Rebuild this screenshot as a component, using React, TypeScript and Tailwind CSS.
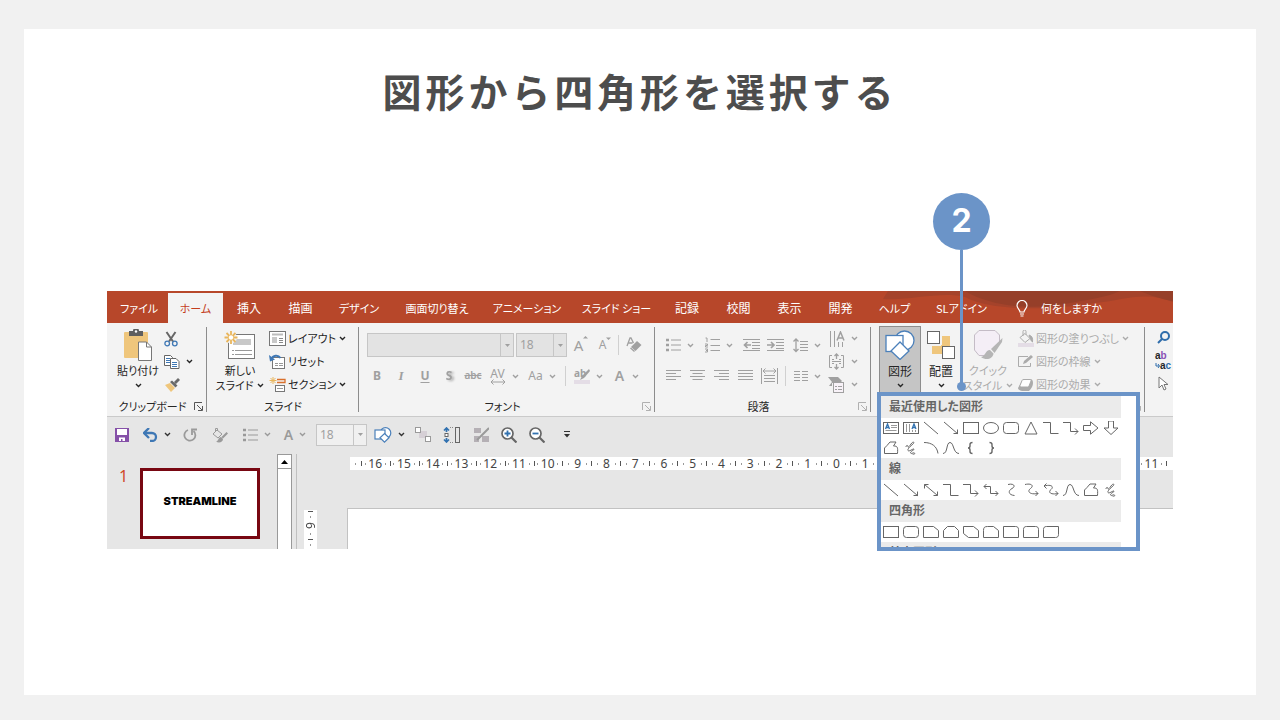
import type { ReactNode } from 'react';

// ── Icon primitives ───────────────────────────────────────────────────────────

interface IconProps {
  w: number;
  h: number;
  className?: string;
  children: ReactNode;
}

function Icon({ w, h, className = '', children }: IconProps) {
  return (
    <svg
      width={w}
      height={h}
      viewBox={`0 0 ${w} ${h}`}
      fill="none"
      stroke="currentColor"
      aria-hidden="true"
      className={`shrink-0 ${className}`}
    >
      {children}
    </svg>
  );
}

function Chevron({ className = '' }: { className?: string }) {
  return (
    <Icon w={7} h={5} className={className}>
      <path d="M1 1L3.5 3.5L6 1" strokeWidth="1.4" />
    </Icon>
  );
}

function Launcher({ className = '' }: { className?: string }) {
  return (
    <button type="button" aria-label="Dialog launcher" className={className}>
      <Icon w={9} h={9}>
        <path d="M.5 8V.5H8M3 3l5 5M8.5 4v4.5H4" />
      </Icon>
    </button>
  );
}

// ── Clipboard and slide icons ─────────────────────────────────────────────────

function PasteIcon() {
  return (
    <Icon w={30} h={32}>
      <rect x="1" y="3" width="24" height="26" rx="1" fill="#efc67c" stroke="none" />
      <path d="M6 2h4a3 3 0 0 1 6 0h4v5H6z" fill="#5f5f5f" stroke="none" />
      <circle cx="13" cy="2.5" r="1.2" fill="#fff" stroke="none" />
      <path d="M15.500 13h8l5 5v13.500h-13z" fill="#fff" stroke="#777" />
      <path d="M23.500 13v5h5" stroke="#777" />
    </Icon>
  );
}

function ScissorsIcon() {
  return (
    <Icon w={14} h={16}>
      <path d="M2.500 1l6.500 9.500M11.500 1L5 10.500" stroke="#666" strokeWidth="2" />
      <circle cx="3.200" cy="12.500" r="2.300" stroke="#3f78b5" strokeWidth="1.300" />
      <circle cx="10.800" cy="12.500" r="2.300" stroke="#3f78b5" strokeWidth="1.300" />
    </Icon>
  );
}

function CopyIcon() {
  return (
    <Icon w={16} h={15}>
      <path d="M.5 1.500h6l2 2v8h-8z" fill="#fff" stroke="#666" />
      <path d="M2 4.500h4M2 6.500h4M2 8.500h4" stroke="#3f78b5" />
      <path d="M6.500 4.500h5.500l3 3v7H6.500z" fill="#fff" stroke="#666" />
      <path d="M8 8.500h5M8 10.500h5M8 12.500h5" stroke="#3f78b5" />
    </Icon>
  );
}

function BrushIcon() {
  return (
    <Icon w={16} h={15}>
      <path d="M1 8l5-2 5 5-4 4z" fill="#efc67c" stroke="none" />
      <path d="M6 5l5.500 5.500 2-2L8 3.500zM10 5l4-4 2 2-4 4z" fill="#6a6a6a" stroke="none" />
    </Icon>
  );
}

function NewSlideIcon() {
  return (
    <Icon w={32} h={29}>
      <rect x="4.500" y="3.500" width="26" height="24" fill="#fff" stroke="#777" />
      <rect x="9" y="8" width="18" height="6" fill="#c8c8c8" stroke="none" />
      <path d="M8 19.500h2M8 23.500h2M11 19.500h17M11 23.500h17" stroke="#999" />
      <circle cx="7" cy="6.500" r="6" fill="#f3f3f3" stroke="none" />
      <path d="M7 0v13M.5 6.500h13M2.500 2l9 9M11.500 2l-9 9" stroke="#e9b65c" strokeWidth="1.800" />
      <circle cx="7" cy="6.500" r="2.200" fill="#fff" stroke="none" />
    </Icon>
  );
}

function LayoutIcon() {
  return (
    <Icon w={17} h={15}>
      <rect x=".5" y=".5" width="16" height="14" fill="#fff" stroke="#777" />
      <path d="M3 3.500h11" stroke="#bbb" strokeWidth="2" />
      <rect x="3" y="6" width="5" height="6" fill="#c8c8c8" stroke="none" />
      <path d="M10 7.500h4M10 9.500h4M10 11.500h4" stroke="#888" />
    </Icon>
  );
}

function ResetIcon() {
  return (
    <Icon w={17} h={15}>
      <rect x="3.500" y="3.500" width="12" height="11" fill="#fff" stroke="#777" />
      <path d="M6 9.500h3M6 11.500h3M10 9.500h4M10 11.500h4" stroke="#999" />
      <path d="M2 5.500C4 1 9 .5 11.500 4" stroke="#3f78b5" strokeWidth="2" />
      <path d="M0 1l1 6.500 5-2z" fill="#3f78b5" stroke="none" />
    </Icon>
  );
}

function SectionIcon() {
  return (
    <Icon w={17} h={15}>
      <path d="M4 0v7M.5 3.500h7M1.500 1l5 5M6.500 1l-5 5" stroke="#e9b65c" />
      <path d="M8 2.500h8v3H8" stroke="#d9702c" strokeWidth="1.300" />
      <rect x="6.500" y="8.500" width="9" height="6" fill="#fff" stroke="#777" />
      <path d="M8 11.500h6" stroke="#999" />
    </Icon>
  );
}

// ── Shape and drawing icons ───────────────────────────────────────────────────

function ShapesIcon({ size }: { size: number }) {
  return (
    <svg width={size} height={size} viewBox="0 0 30 30" fill="#fff" stroke="#4b80ba" strokeWidth="1.300" aria-hidden="true" className="shrink-0">
      <circle cx="19.500" cy="10.500" r="9.500" />
      <rect x="1" y="5.500" width="17" height="16" />
      <path d="M15 12l9 9-9 8.500L6 21z" />
    </svg>
  );
}

function SmallShapesIcon() {
  return (
    <Icon w={18} h={16}>
      <g fill="#fff" stroke="#4b80ba" strokeWidth="1.200">
        <circle cx="11.500" cy="6" r="5.300" />
        <rect x="1" y="3" width="10" height="9" />
        <path d="M10.500 6.500l4.500 4.300-4.500 4.300L6 10.800z" />
      </g>
    </Icon>
  );
}

function ArrangeIcon() {
  return (
    <Icon w={28} h={28}>
      <rect x="5" y="5" width="18" height="18" fill="#efc67c" stroke="none" />
      <rect x=".5" y=".5" width="12" height="12" fill="#fff" stroke="#666" />
      <path d="M14 14V3M3 14h11" stroke="#f3f3f3" strokeWidth="2" />
      <rect x="15.500" y="15.500" width="12" height="12" fill="#fff" stroke="#666" />
    </Icon>
  );
}

function QuickStyleIcon() {
  return (
    <Icon w={31} h={33}>
      <path d="M11 26.500H6L1.500 21V6L6 1.500h16L26.500 6v7" fill="#f4eef6" stroke="#c4bcc6" />
      <path d="M29.500 9L18 20l3.500 4L29 13z" fill="#b5b5b5" stroke="none" />
      <path d="M17 21c-5 0-4 6-9 7 5 4 12 2 12.500-3.500z" fill="#b5b5b5" stroke="none" />
    </Icon>
  );
}

function FillIcon() {
  return (
    <Icon w={16} h={17}>
      <path d="M7 3.500l5 5-5 4-5-5zM5 6V1.500a1.500 1.500 0 0 1 3 0V5" />
      <path d="M11 5c3 1 4 3 3.500 7-2-1-2-4-3.500-7z" fill="currentColor" />
      <rect x="0" y="13" width="16" height="4" fill="#e4dde6" stroke="none" />
    </Icon>
  );
}

function OutlineIcon() {
  return (
    <Icon w={16} h={13}>
      <path d="M10 1.500H.5v10h12V8" />
      <path d="M5 9l1-3 7-6 2 2-7 6z" fill="currentColor" stroke="none" />
    </Icon>
  );
}

function EffectIcon() {
  return (
    <Icon w={16} h={14}>
      <path d="M5 1h7q3 0 3 4t-4 8H4Q0 12 0 10z" fill="currentColor" stroke="none" />
      <path d="M6 1.500h6.500q1 0 .5 1.500l-2 5q-.5 1-1.500 1H3Q1.500 9 2 7.500l2-5Q4.500 1.500 6 1.500z" fill="#fff" />
    </Icon>
  );
}

// ── Font icons ────────────────────────────────────────────────────────────────

function EraserIcon() {
  return (
    <Icon w={16} h={16}>
      <path d="M1 9L4 1h1l2.500 5M2.500 6h4" strokeWidth="1.300" />
      <path d="M5 10l6-6 4.500 4-6 6z" fill="currentColor" stroke="none" />
      <path d="M4.500 11l4 3.500" strokeWidth="1.300" />
    </Icon>
  );
}

function HighlightIcon() {
  return (
    <span className="relative flex h-4 w-4 items-start border-b-4 border-[#e4dde6] text-[10px] leading-[11px] font-bold">
      ab
      <Icon w={16} h={13} className="absolute top-0 left-0">
        <path d="M15 1L8 8l-2 4 4-2 6-7z" fill="currentColor" stroke="none" />
      </Icon>
    </span>
  );
}

function SpacingIcon() {
  return (
    <span className="flex flex-col items-center text-xs leading-[11px]">
      AV
      <Icon w={16} h={6}>
        <path d="M1 3h14M3.500 .5L1 3l2.500 2.500M12.500 .5L15 3l-2.500 2.500" />
      </Icon>
    </span>
  );
}

// ── Paragraph icons ───────────────────────────────────────────────────────────

function BulletsIcon() {
  return (
    <Icon w={15} h={14}>
      <path d="M0 2h3M0 7h3M0 12h3" strokeWidth="2.500" />
      <path d="M5 2h10M5 7h10M5 12h10" />
    </Icon>
  );
}

function NumberingIcon() {
  return (
    <Icon w={15} h={16}>
      <path d="M.5 1H2v4M0 7h2.500v1.500H.5V10H3M0 12h2.500v3H0M1 13.500h1.500M5.500 2.500H15M5.500 8.500H15M5.500 13.500H15" />
    </Icon>
  );
}

function IndentIcon({ out = false }: { out?: boolean }) {
  return (
    <Icon w={17} h={14}>
      <path d="M0 1.500h17M9 4.500h8M9 7.500h8M9 10.500h8M0 12.500h17" />
      {out ? (
        <path d="M8 7H2M4.500 4L1.500 7l3 3" strokeWidth="1.700" />
      ) : (
        <path d="M0 7h6M4 4l3 3-3 3" strokeWidth="1.700" />
      )}
    </Icon>
  );
}

function LineSpacingIcon() {
  return (
    <Icon w={15} h={17}>
      <path d="M3 2v12M.5 4.500L3 2l2.500 2.500M.5 12L3 14.500 5.500 12" strokeWidth="1.300" />
      <path d="M7 4.500h8M7 7.500h8M7 10.500h8M7 13.500h8" />
    </Icon>
  );
}

function AlignIcon({ d }: { d: string }) {
  return (
    <Icon w={15} h={12}>
      <path d={d} />
    </Icon>
  );
}

function DistributeIcon() {
  return (
    <Icon w={17} h={16}>
      <path d="M.5 0v16M16.500 0v16M2 3h13M4.500 .5L2 3l2.500 2.500M12.500 .5L15 3l-2.500 2.500M3 7.500h11M3 10.500h11M3 13.500h11" />
    </Icon>
  );
}

function ColumnsIcon() {
  return (
    <Icon w={14} h={12}>
      <path d="M0 1.500h6M8 1.500h6M0 4.500h6M8 4.500h6M0 7.500h6M8 7.500h6M0 10.500h6M8 10.500h6" />
    </Icon>
  );
}

function TextDirectionIcon() {
  return (
    <Icon w={16} h={16}>
      <path d="M1.500 0v16M5.500 0v16M9.500 11v5M13.500 11v5" />
      <path d="M8 9.500L11.500 1 15 9.500M9 7h5" strokeWidth="1.500" />
    </Icon>
  );
}

function TextAlignIcon() {
  return (
    <Icon w={17} h={17}>
      <path d="M4 2.500H1.500v12H4M13 2.500h2.500v12H13M4 8.500h9M4 6.500h2M4 10.500h2M11 6.500h2M11 10.500h2" />
      <path d="M8.500 1v5M6.500 3l2-2 2 2M8.500 11v5M6.500 14l2 2 2-2" strokeWidth="1.300" />
    </Icon>
  );
}

function SmartArtIcon() {
  return (
    <Icon w={17} h={17}>
      <path d="M0 1h10l4 4-2 2H4v3H1l3-4z" fill="currentColor" stroke="none" />
      <rect x="5.500" y="6.500" width="10" height="10" fill="#f8f2f8" />
      <path d="M7 10.500h2M10 10.500h4M7 13.500h2M10 13.500h4" />
    </Icon>
  );
}

const ALIGN_LEFT = 'M0 .5h15M0 3.500h10M0 6.500h15M0 9.500h10';
const ALIGN_CENTER = 'M0 .5h15M2.500 3.500h10M0 6.500h15M2.500 9.500h10';
const ALIGN_RIGHT = 'M0 .5h15M5 3.500h10M0 6.500h15M5 9.500h10';
const ALIGN_JUSTIFY = 'M0 .5h15M0 3.500h15M0 6.500h15M0 9.500h15';

// ── Ribbon tabs ───────────────────────────────────────────────────────────────

const TABS = [
  { label: 'ファイル', width: 'w-[58px]', size: 'text-[11px]' },
  { label: 'ホーム', width: 'w-[55px]', size: 'text-[11px]', active: true },
  { label: '挿入', width: 'w-[52px]', size: 'text-xs' },
  { label: '描画', width: 'w-[51px]', size: 'text-xs' },
  { label: 'デザイン', width: 'w-[66px]', size: 'text-[11px]' },
  { label: '画面切り替え', width: 'w-[90px]', size: 'text-[11px]' },
  { label: 'アニメーション', width: 'w-[90px]', size: 'text-[11px]' },
  { label: 'スライド ショー', width: 'w-[89px]', size: 'text-[11px]' },
  { label: '記録', width: 'w-[52px]', size: 'text-xs' },
  { label: '校閲', width: 'w-[51px]', size: 'text-xs' },
  { label: '表示', width: 'w-[51px]', size: 'text-xs' },
  { label: '開発', width: 'w-[51px]', size: 'text-xs' },
  { label: 'ヘルプ', width: 'w-[57px]', size: 'text-[11px]' },
  { label: 'SLアドイン', width: 'w-[77px]', size: 'text-[11px]' },
];

function TabBar() {
  return (
    <nav className="relative flex h-8 bg-[#b7472a] pl-[3px] text-white">
      <svg width="293" height="32" viewBox="0 0 293 32" aria-hidden="true" className="absolute top-0 right-0">
        <path d="M8 0H293V11C265 -1 240 10 215 12C180 18 115 22 85 6C60 0 30 10 3 8Z" fill="#a5432b" />
        <path d="M85 0H240C225 7 205 9 190 12C150 20 110 15 85 0Z" fill="#963f29" />
        <path d="M260 0H293V10C280 8 270 4 260 0Z" fill="#963f29" />
      </svg>
      {TABS.map((tab) => (
        <a
          key={tab.label}
          href="#"
          className={`relative flex shrink-0 items-center justify-center whitespace-nowrap ${tab.width} ${tab.size} ${
            tab.active ? 'mt-[2px] bg-[#f3f3f3] text-[#c43e1c]' : 'pt-[2px]'
          }`}
        >
          {tab.label}
        </a>
      ))}
      <a href="#" className="relative ml-4 flex items-center gap-[13px] pt-[2px] text-[11px] whitespace-nowrap">
        <Icon w={12} h={17}>
          <path d="M4 12C4 9.500 1 8.500 1 5.500a5 5 0 0 1 10 0c0 3-3 4-3 6.500zM4 14h4M4.500 16h3" strokeWidth="1.200" />
        </Icon>
        何をしますか
      </a>
    </nav>
  );
}

// ── Ribbon groups ─────────────────────────────────────────────────────────────

interface GroupProps {
  label: string;
  className: string;
  launcher?: string;
  children: ReactNode;
}

function Group({ label, className, launcher, children }: GroupProps) {
  return (
    <section
      aria-label={label}
      className={`relative flex shrink-0 flex-col after:absolute after:top-1 after:right-0 after:bottom-1 after:w-px after:bg-[#8c8c8c] ${className}`}
    >
      <div className="flex h-[76px] pt-1">{children}</div>
      <div className="flex items-center pr-1 pl-1 text-[11px]">
        <span className="flex-1 text-center">{label}</span>
        {launcher && <Launcher className={launcher} />}
      </div>
    </section>
  );
}

function BigButton({ icon, lines, className = '' }: { icon: ReactNode; lines: string[]; className?: string }) {
  return (
    <button type="button" className={`flex shrink-0 flex-col items-center ${className}`}>
      <span className="flex h-9 items-center">{icon}</span>
      <span className="leading-[15px] whitespace-nowrap">{lines[0]}</span>
      <span className="flex h-[15px] items-center gap-1 leading-[15px] whitespace-nowrap">
        {lines[1]}
        <Chevron />
      </span>
    </button>
  );
}

function RowButton({ icon, label, chevron = true }: { icon: ReactNode; label: string; chevron?: boolean }) {
  return (
    <button type="button" className="flex h-[23px] items-center gap-[2px] text-[11px] whitespace-nowrap">
      {icon}
      {label}
      {chevron && <Chevron className="ml-px" />}
    </button>
  );
}

function Cell({ label, className = 'w-6', chevron = false, children }: { label: string; className?: string; chevron?: boolean; children: ReactNode }) {
  return (
    <button type="button" aria-label={label} className={`flex h-6 shrink-0 items-center justify-center gap-[6px] ${className}`}>
      {children}
      {chevron && <Chevron />}
    </button>
  );
}

function Combo({ label, value, className }: { label: string; value: string; className: string }) {
  return (
    <div className={`relative flex shrink-0 border border-[#c6c6c6] text-[#a0a0a0] ${className}`}>
      <select aria-label={label} defaultValue={value} className="w-full appearance-none bg-transparent pl-[3px] font-['Noto_Sans'] text-xs outline-none">
        <option value={value}>{value}</option>
      </select>
      <span className="pointer-events-none absolute inset-y-0 right-0 flex w-[13px] items-center justify-center border-l border-[#c6c6c6]">
        <svg width="5" height="3" viewBox="0 0 5 3" fill="currentColor" aria-hidden="true">
          <path d="M0 0h5L2.500 3z" />
        </svg>
      </span>
    </div>
  );
}

function Divider({ className = 'mx-1' }: { className?: string }) {
  return <span className={`h-5 w-px shrink-0 bg-[#d0d0d0] ${className}`} />;
}

function FontGroup() {
  return (
    <Group label="フォント" className="w-[296px]" launcher="text-[#b0b0b0]">
      <div className="flex flex-col gap-[7px] pl-2 text-[#a0a0a0]">
        <div className="flex items-center gap-[2px] pt-[6px]">
          <Combo label="Font" value="" className="h-6 w-[147px] bg-[#e3e3e3]" />
          <Combo label="Font size" value="18" className="h-6 w-[51px] bg-[#e3e3e3]" />
          <Cell label="Grow font">
            <span className="flex items-start font-['Noto_Sans'] text-[15px]">
              A
              <Icon w={5} h={4}>
                <path d="M0 3.500L2.500 1 5 3.500z" fill="currentColor" stroke="none" />
              </Icon>
            </span>
          </Cell>
          <Cell label="Shrink font" className="w-5">
            <span className="flex items-start font-['Noto_Sans'] text-xs">
              A
              <Icon w={5} h={4}>
                <path d="M0 .5h5L2.500 3z" fill="currentColor" stroke="none" />
              </Icon>
            </span>
          </Cell>
          <Divider className="mx-px" />
          <Cell label="Clear formatting">
            <EraserIcon />
          </Cell>
        </div>
        <div className="-ml-[2px] flex items-center font-['Noto_Sans'] text-xs">
          <Cell label="Bold">
            <b>B</b>
          </Cell>
          <Cell label="Italic">
            <i className="font-['Liberation_Serif'] text-[13px] font-bold">I</i>
          </Cell>
          <Cell label="Underline">
            <span className="font-bold underline underline-offset-2">U</span>
          </Cell>
          <Cell label="Shadow">
            <b className="drop-shadow-[2px_1px_1px_#aaa]">S</b>
          </Cell>
          <Cell label="Strikethrough">
            <span className="text-[10px] font-semibold line-through">abc</span>
          </Cell>
          <Cell label="Character spacing" className="w-[38px]" chevron>
            <SpacingIcon />
          </Cell>
          <Cell label="Change case" className="w-[38px]" chevron>
            <span>Aa</span>
          </Cell>
          <Divider />
          <Cell label="Highlight" className="w-[37px]" chevron>
            <HighlightIcon />
          </Cell>
          <Cell label="Font color" className="w-10" chevron>
            <span className="mr-[2px] text-sm font-semibold">A</span>
          </Cell>
        </div>
      </div>
    </Group>
  );
}

function ParagraphGroup() {
  return (
    <Group label="段落" className="w-[216px]" launcher="text-[#b0b0b0]">
      <div className="flex w-[172px] flex-col gap-[7px] pl-[6px] text-[#a0a0a0]">
        <div className="flex items-center pt-[6px]">
          <Cell label="Bullets" className="w-[38px]" chevron>
            <BulletsIcon />
          </Cell>
          <Cell label="Numbering" className="w-10" chevron>
            <NumberingIcon />
          </Cell>
          <Cell label="Decrease indent">
            <IndentIcon out />
          </Cell>
          <Cell label="Increase indent">
            <IndentIcon />
          </Cell>
          <Cell label="Line spacing" className="w-10" chevron>
            <LineSpacingIcon />
          </Cell>
        </div>
        <div className="flex items-center">
          <Cell label="Align left">
            <AlignIcon d={ALIGN_LEFT} />
          </Cell>
          <Cell label="Center">
            <AlignIcon d={ALIGN_CENTER} />
          </Cell>
          <Cell label="Align right">
            <AlignIcon d={ALIGN_RIGHT} />
          </Cell>
          <Cell label="Justify">
            <AlignIcon d={ALIGN_JUSTIFY} />
          </Cell>
          <Cell label="Distribute">
            <DistributeIcon />
          </Cell>
          <Divider />
          <Cell label="Columns" className="w-[34px]" chevron>
            <ColumnsIcon />
          </Cell>
        </div>
      </div>
      <div className="flex flex-col text-[#a0a0a0]">
        {[
          { label: 'Text direction', icon: <TextDirectionIcon /> },
          { label: 'Align text', icon: <TextAlignIcon /> },
          { label: 'Convert to SmartArt', icon: <SmartArtIcon /> },
        ].map(({ label, icon }) => (
          <button key={label} type="button" aria-label={label} className="flex h-[23px] w-8 items-center justify-center gap-[6px]">
            {icon}
            <Chevron />
          </button>
        ))}
      </div>
    </Group>
  );
}

function DrawingGroup() {
  return (
    <Group label="図形描画" className="w-[274px]" launcher="text-[#b0b0b0]">
      <div className="-mt-px ml-2 flex h-[70px] w-[42px] shrink-0 justify-center border border-[#8d8d8d] bg-[#c5c5c5]">
        <BigButton icon={<ShapesIcon size={30} />} lines={['図形', '']} />
      </div>
      <BigButton icon={<ArrangeIcon />} lines={['配置', '']} className="w-10" />
      <BigButton icon={<QuickStyleIcon />} lines={['クイック', 'スタイル']} className="w-[54px] text-[11px] text-[#ababab]" />
      <div className="ml-[3px] flex flex-col text-[#ababab]">
        <RowButton icon={<FillIcon />} label="図形の塗りつぶし" />
        <RowButton icon={<OutlineIcon />} label="図形の枠線" />
        <RowButton icon={<EffectIcon />} label="図形の効果" />
      </div>
    </Group>
  );
}

function Ribbon() {
  return (
    <div className="flex h-[94px] overflow-hidden border-b border-[#cacaca] bg-[#f3f3f3] text-[#262626]">
      <Group label="クリップボード" className="w-[100px]" launcher="text-[#555]">
        <BigButton icon={<PasteIcon />} lines={['貼り付け', '']} className="ml-2 w-[46px] text-[11px]" />
        <div className="ml-[3px] flex flex-col">
          <button type="button" aria-label="Cut" className="flex h-[23px] items-center">
            <ScissorsIcon />
          </button>
          <button type="button" aria-label="Copy" className="flex h-[23px] items-center gap-[6px]">
            <CopyIcon />
            <Chevron />
          </button>
          <button type="button" aria-label="Format painter" className="flex h-[23px] items-center">
            <BrushIcon />
          </button>
        </div>
      </Group>
      <Group label="スライド" className="w-[152px]">
        <BigButton icon={<NewSlideIcon />} lines={['新しい', 'スライド']} className="ml-2 w-[50px] text-[11px]" />
        <div className="ml-1 flex flex-col">
          <RowButton icon={<LayoutIcon />} label="レイアウト" />
          <RowButton icon={<ResetIcon />} label="リセット" chevron={false} />
          <RowButton icon={<SectionIcon />} label="セクション" />
        </div>
      </Group>
      <FontGroup />
      <ParagraphGroup />
      <DrawingGroup />
      <div className="flex flex-col pt-[3px] pl-[10px]">
        <button type="button" aria-label="Find" className="flex h-[23px] items-center pl-[2px]">
          <Icon w={13} h={13}>
            <circle cx="8" cy="5" r="4" stroke="#2f6dab" strokeWidth="2" />
            <path d="M5 8L1 12" stroke="#2f6dab" strokeWidth="2" />
          </Icon>
        </button>
        <button type="button" aria-label="Replace" className="flex h-[23px] flex-col justify-center font-['Liberation_Sans'] text-[10px] leading-[10px] font-bold">
          <span className="block h-[10px] text-left">
            a<span className="text-[#8b4fb5]">b</span>
          </span>
          <span className="flex h-[10px] items-center">
            <Icon w={5} h={6}>
              <path d="M1 0v3h3M3 1l1.500 2L3 5" stroke="#2f6dab" />
            </Icon>
            a<span className="text-[#2f6dab]">c</span>
          </span>
        </button>
        <button type="button" aria-label="Select" className="flex h-[23px] items-center pl-[3px]">
          <Icon w={11} h={15}>
            <path d="M1 1v11l3-3 2 5 2-1-2-4.500h4z" fill="#fff" stroke="#777" />
          </Icon>
        </button>
      </div>
    </div>
  );
}

// ── Quick access toolbar ──────────────────────────────────────────────────────

function QuickAccess() {
  return (
    <div className="flex h-[35px] items-center text-[#9a9a9a]">
      <Cell label="Save" className="w-[30px]">
        <Icon w={14} h={14}>
          <path d="M0 0h14v14H0z" fill="#8550a8" stroke="none" />
          <path d="M2 1h10v6H2zM4 9.500h6V13H7.500v-2H6v2H4z" fill="#fff" stroke="none" />
        </Icon>
      </Cell>
      <Cell label="Undo" className="w-10 text-[#333]" chevron>
        <Icon w={15} h={14}>
          <path d="M2 5h7a4 4 0 0 1 0 8H7" stroke="#3f78b5" strokeWidth="2.300" />
          <path d="M6 0L1 5l5 5" stroke="#3f78b5" strokeWidth="2.300" />
        </Icon>
      </Cell>
      <Cell label="Redo" className="w-[26px]">
        <Icon w={14} h={14}>
          <path d="M5 2a5.500 5.500 0 1 0 5.500 1" strokeWidth="1.800" />
          <path d="M9 7V1.500h5" strokeWidth="1.800" />
        </Icon>
      </Cell>
      <Cell label="Fill" className="w-8">
        <Icon w={17} h={16}>
          <path d="M6 3l5 4-4 4-5-4zM4.500 5V1.500h2V4" />
          <path d="M15.500 5l-5 5 1.500 1.500 5-5zM10 10c-3 0-2 4-5 4.500 3 2 7 .5 7-2.500z" fill="currentColor" stroke="none" />
        </Icon>
      </Cell>
      <Cell label="Bullets" className="w-11" chevron>
        <BulletsIcon />
      </Cell>
      <Cell label="Font color" className="w-8" chevron>
        <span className="font-['Noto_Sans'] text-sm font-semibold">A</span>
      </Cell>
      <Combo label="Size" value="18" className="ml-[5px] h-[22px] w-[51px] bg-[#f0f0f0]" />
      <Cell label="Shapes" className="ml-1 w-9 text-[#333]" chevron>
        <SmallShapesIcon />
      </Cell>
      <Cell label="Group" className="ml-[2px] w-7">
        <Icon w={16} h={15}>
          <rect x="4" y="4" width="8" height="7" fill="#d6d0d6" stroke="none" />
          <rect x=".5" y=".5" width="5" height="5" fill="#fff" />
          <rect x="10.500" y="9.500" width="5" height="5" fill="#fff" />
        </Icon>
      </Cell>
      <Cell label="Height" className="w-7">
        <Icon w={17} h={16}>
          <path d="M3.500 1v4M1 3.500L3.500 1 6 3.500M3.500 11v4M1 12.500L3.500 15 6 12.500" stroke="#3272b0" strokeWidth="1.700" />
          <rect x="2" y="6.500" width="3" height="3" fill="#fff" stroke="#666" />
          <path d="M7 .5h4M7 15.500h4" stroke="#888" strokeDasharray="1 1" />
          <rect x="12.500" y=".5" width="4" height="15" stroke="#666" />
        </Icon>
      </Cell>
      <Cell label="Edit shape" className="ml-[2px] w-7">
        <Icon w={15} h={15}>
          <path d="M0 1h7v5H0zM0 9h5v6H0zM8 9h7v6H8z" fill="#b5b0b5" stroke="none" />
          <path d="M15 1L6 10l-3 3" strokeWidth="2" />
        </Icon>
      </Cell>
      <Cell label="Zoom in" className="w-7">
        <Icon w={16} h={16}>
          <circle cx="6.500" cy="6.500" r="5.500" fill="#fff" stroke="#666" strokeWidth="1.700" />
          <path d="M10.500 10.500l5 5" stroke="#666" strokeWidth="2.200" />
          <path d="M3.500 6.500h6M6.500 3.500v6" stroke="#3272b0" strokeWidth="1.800" />
        </Icon>
      </Cell>
      <Cell label="Zoom out" className="w-7">
        <Icon w={16} h={16}>
          <circle cx="6.500" cy="6.500" r="5.500" fill="#fff" stroke="#666" strokeWidth="1.700" />
          <path d="M10.500 10.500l5 5" stroke="#666" strokeWidth="2.200" />
          <path d="M3.500 6.500h6" stroke="#3272b0" strokeWidth="1.800" />
        </Icon>
      </Cell>
      <Cell label="Customize" className="w-8 text-[#333]">
        <Icon w={6} h={7}>
          <path d="M0 .5h6" />
          <path d="M0 3h6L3 6.500z" fill="currentColor" stroke="none" />
        </Icon>
      </Cell>
    </div>
  );
}

// ── Workspace ─────────────────────────────────────────────────────────────────

// 16 down to 0, then back up to 11
const RULER = Array.from({ length: 28 }, (_, i) => Math.abs(16 - i));

function Workspace() {
  return (
    <div className="flex h-[97px] overflow-hidden">
      <div className="flex shrink-0 pt-4 pl-3 font-['Noto_Sans'] text-base text-[#d04a2b]">
        <span className="w-[21px] leading-4">1</span>
        <div className="flex h-[71px] w-[120px] items-center justify-center border-3 border-[#780712] bg-white pb-1 font-[Inter] text-[11px] font-black text-black">
          STREAMLINE
        </div>
      </div>
      <div className="mt-[2px] ml-[17px] flex w-[15px] shrink-0 flex-col border border-b-0 border-[#999] bg-white">
        <button type="button" aria-label="Scroll up" className="flex h-[14px] items-center justify-center border-b border-[#999]">
          <svg width="7" height="4" viewBox="0 0 7 4" aria-hidden="true">
            <path d="M0 4h7L3.500 0z" />
          </svg>
        </button>
      </div>
      <div className="mt-[2px] ml-1 w-px shrink-0 bg-[#c0c0c0]" />
      <div className="mt-[58px] ml-[7px] flex w-[13px] shrink-0 flex-col items-center gap-1 bg-white pt-px text-[#444]">
        <span className="h-px w-[5px] bg-[#555]" />
        <span className="h-[2px] w-px bg-[#999]" />
        <span className="h-[7px] rotate-180 font-['Noto_Sans'] text-xs leading-[13px] [writing-mode:vertical-rl]">9</span>
        <span className="h-[2px] w-px bg-[#999]" />
        <span className="h-px w-[5px] bg-[#555]" />
        <span className="h-[2px] w-px bg-[#999]" />
      </div>
      <div className="ml-[30px] flex min-w-0 flex-1 flex-col pt-[5px]">
        <div className="ml-[3px] flex h-[13px] bg-white pr-[6px] font-['Noto_Sans'] text-xs leading-[13px] text-[#444]">
          <span className="flex w-[11px] items-center justify-center">
            <span className="h-[2px] w-px bg-[#999]" />
          </span>
          {RULER.map((n, i) => (
            <span key={i} className="flex flex-1 items-center justify-between">
              <span className="h-[5px] w-px bg-[#555]" />
              <span className="h-[2px] w-px bg-[#999]" />
              {n}
              <span className="mr-1 h-[2px] w-px bg-[#999]" />
            </span>
          ))}
          <span className="mt-1 h-[5px] w-px bg-[#555]" />
        </div>
        <div className="mt-[38px] flex-1 border-t border-l border-[#c2c2c2] bg-white" />
      </div>
    </div>
  );
}

// ── Shape gallery ─────────────────────────────────────────────────────────────

// Every glyph is drawn in a 16 x 14 box
const SHAPES: Record<string, ReactNode> = {
  textBox: (
    <>
      <rect x=".5" y="1.500" width="15" height="11" />
      <path d="M2.500 8L4.500 3 6.500 8M3 6.500h3" stroke="#3272b0" strokeWidth="1.300" />
      <path d="M8 4.500h6M8 6.500h6M2.500 9.500h11" stroke="#999" />
    </>
  ),
  verticalText: (
    <>
      <rect x=".5" y="1.500" width="15" height="11" />
      <path d="M9 8l2-5 2 5M9.500 6.500h3" stroke="#3272b0" strokeWidth="1.300" />
      <path d="M3.500 3v8M6.500 3v8M9.500 9v2M12.500 9v2" stroke="#999" />
    </>
  ),
  line: <path d="M1 1l14 12" />,
  arrow: <path d="M1 1l14 12M10.500 12.500H14.500V8.500" />,
  doubleArrow: <path d="M1.500 1.500l13 11M10.500 12.500h4v-4M1.500 5.500v-4h4" />,
  rect: <rect x=".5" y="1.500" width="15" height="11" />,
  ellipse: <ellipse cx="8" cy="7" rx="7.500" ry="5.500" />,
  roundRect: <rect x=".5" y="1.500" width="15" height="11" rx="3" />,
  triangle: <path d="M8 1l6 12H2z" />,
  elbow: <path d="M0 1.500h7.500v11h8" />,
  elbowArrow: <path d="M0 1.500h7.500v9H15M12 7.500l3 3-3 3" />,
  elbowDouble: <path d="M1 3.500h6.500v7H15M12.500 8l2.500 2.500-2.500 2.500M3.500 1L1 3.500 3.500 6" />,
  curve: <path d="M5 1.500C11 0 13 3.500 9 5.500S5 12 11.500 12.500" />,
  curveArrow: <path d="M2 1.500C9 0 11 3 7.500 5.500S6 12 15 10.500M12.500 8l2.500 2.500-2.500 2.500" />,
  curveDouble: <path d="M1 3C9 1 11 4 8 6.500S7 12 15 10.500M12.500 8l2.500 2.500-2.500 2.500M3.500 .5L1 3 3.500 5.500" />,
  rightArrow: <path d="M.5 4.500h7V.8L15 7l-7.500 6.200V9.500h-7z" />,
  downArrow: <path d="M5.500 0h5v7h4.500L8 13.500 1 7h4.500z" />,
  freeform: <path d="M4 4.500L7 1h6l-2.500 4c4 0 4.500 1 4 7.500H1.500V7z" />,
  scribble: <path d="M3 6c0-2 2-2 2-.5S6 6 8 3s4-2 2 0-6 5-5 6.500 5-2 6-1.500-4 2.500-3.500 4 3-1 4 0-1 1.500-2 1" />,
  arc: <path d="M1 1.500c8 0 13 4 14 11" />,
  wave: <path d="M0 12.500C5 12.500 3 1.500 7 1.500S10 12.500 16 12.500" />,
  leftBrace: <path d="M9.500 1.500q-2.500 0-2.500 2V5q0 2-2 2 2 0 2 2v1.500q0 2 2.500 2" strokeWidth="1.400" />,
  rightBrace: <path d="M6.500 1.500q2.500 0 2.500 2V5q0 2 2 2-2 0-2 2v1.500q0 2-2.500 2" strokeWidth="1.400" />,
  snipOne: <path d="M.5 1.500h10l5 4v7H.5z" />,
  snipTop: <path d="M4.500 1.500h7l4 4v7H.5v-7z" />,
  snipDiagonal: <path d="M.5 1.500h10l5 4v7h-10l-5-4z" />,
  snipRound: <path d="M4.500 1.500h6l5 4v7H.5v-7c0-3 1-4 4-4z" />,
  roundOne: <path d="M.5 1.500h12c2 0 3 1 3 3v8H.5z" />,
  roundTop: <path d="M3.500 1.500h9c2 0 3 1 3 3v8H.5v-8c0-2 1-3 3-3z" />,
  roundDiagonal: <path d="M3.500 1.500h12v8c0 2-1 3-3 3H.5v-8c0-2 1-3 3-3z" />,
};

const SECTIONS = [
  {
    title: '最近使用した図形',
    shapes: [
      'textBox', 'verticalText', 'line', 'arrow', 'rect', 'ellipse', 'roundRect', 'triangle', 'elbow', 'elbowArrow', 'rightArrow', 'downArrow',
      'freeform', 'scribble', 'arc', 'wave', 'leftBrace', 'rightBrace',
    ],
  },
  {
    title: '線',
    shapes: ['line', 'arrow', 'doubleArrow', 'elbow', 'elbowArrow', 'elbowDouble', 'curve', 'curveArrow', 'curveDouble', 'wave', 'freeform', 'scribble'],
  },
  {
    title: '四角形',
    shapes: ['rect', 'roundRect', 'snipOne', 'snipTop', 'snipDiagonal', 'snipRound', 'roundOne', 'roundTop', 'roundDiagonal'],
  },
  { title: '基本図形', shapes: [] },
];

function ShapeGallery() {
  return (
    <div className="absolute top-[101px] left-[770px] h-[159px] w-[263px] overflow-hidden border-4 border-[#6b94c8] bg-white pr-[15px] text-[#666]">
      {SECTIONS.map((section) => (
        <section key={section.title}>
          <h2 className="h-[22px] bg-[#ebebeb] pl-2 text-xs leading-5 font-bold">{section.title}</h2>
          <div className="grid grid-cols-12">
            {section.shapes.map((name) => (
              <button key={name} type="button" aria-label={name} className="flex h-5 items-center justify-center">
                <Icon w={16} h={14}>
                  {SHAPES[name]}
                </Icon>
              </button>
            ))}
          </div>
        </section>
      ))}
    </div>
  );
}

function Callout() {
  return (
    <div className="absolute -top-[98px] left-[826px] flex flex-col items-center">
      <div className="flex size-[57px] items-center justify-center rounded-full bg-[#6b94c8] font-[Inter] text-[32px] font-bold text-white">2</div>
      <div className="h-[136px] w-[3px] bg-[#6b94c8]" />
      <div className="-mt-1 size-[9px] rounded-full bg-[#6b94c8]" />
    </div>
  );
}

// ── Page ──────────────────────────────────────────────────────────────────────

export default function App() {
  return (
    <div className="flex min-h-screen bg-[#f1f1f1] px-6 pt-[29px] pb-[25px] font-['Noto_Sans_CJK_JP',sans-serif] text-[#4d4d4d]">
      <main className="flex-1 bg-white px-[83px] pt-8">
        <h1 className="text-center text-[39px] leading-[58px] font-bold tracking-widest">図形から四角形を選択する</h1>
        <div className="relative mt-[172px] bg-[#e6e6e6] text-xs [font-feature-settings:'palt']">
          <div className="overflow-hidden">
            <TabBar />
            <Ribbon />
            <QuickAccess />
            <Workspace />
          </div>
          <ShapeGallery />
          <Callout />
        </div>
      </main>
    </div>
  );
}
